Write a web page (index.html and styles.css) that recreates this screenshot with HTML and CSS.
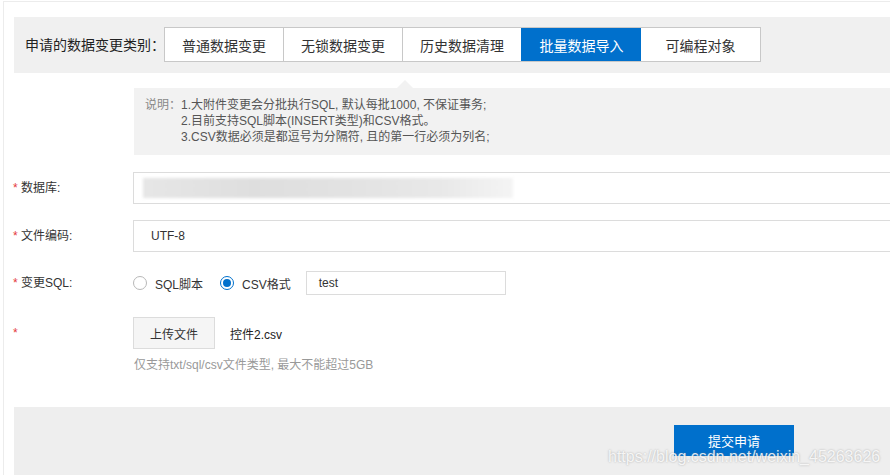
FILE: index.html
```html
<!DOCTYPE html>
<html lang="zh-CN">
<head>
<meta charset="utf-8">
<title>申请数据变更</title>
<link rel="stylesheet" href="styles.css">
</head>
<body>
<div class="page">
  <div class="band">
    <span class="band-label">申请的数据变更类别：</span>
    <div class="tabs">
      <span class="tab">普通数据变更</span>
      <span class="tab">无锁数据变更</span>
      <span class="tab">历史数据清理</span>
      <span class="tab active">批量数据导入</span>
      <span class="tab">可编程对象</span>
    </div>
  </div>

  <div class="desc">
    <span class="desc-title">说明：</span>
    <div class="desc-lines">
      <div>1.大附件变更会分批执行SQL, 默认每批1000, 不保证事务;</div>
      <div>2.目前支持SQL脚本(INSERT类型)和CSV格式。</div>
      <div>3.CSV数据必须是都逗号为分隔符, 且的第一行必须为列名;</div>
    </div>
  </div>

  <div class="form">
    <div class="row r1">
      <label class="label"><i>*</i> 数据库:</label>
      <div class="input wide"><span class="blurred"></span></div>
    </div>
    <div class="row r2">
      <label class="label"><i>*</i> 文件编码:</label>
      <div class="input wide enc">UTF-8</div>
    </div>
    <div class="row r3">
      <label class="label"><i>*</i> 变更SQL:</label>
      <div class="radios">
        <span class="radio"></span><span class="radio-text">SQL脚本</span>
        <span class="radio checked"></span><span class="radio-text last">CSV格式</span>
        <div class="input small">test</div>
      </div>
    </div>
    <div class="row r4">
      <label class="label"><i>*</i></label>
      <span class="upload">上传文件</span>
      <span class="file-name">控件2.csv</span>
    </div>
    <div class="hint">仅支持txt/sql/csv文件类型, 最大不能超过5GB</div>
  </div>

  <div class="footer">
    <span class="submit">提交申请</span>
    <span class="watermark">https://blog.csdn.net/weixin_45263626</span>
  </div>
</div>
</body>
</html>
```

FILE: styles.css
```css
html, body {
  margin: 0;
  padding: 0;
  overflow: hidden;
  background: #fff;
}
body {
  font-family: "Liberation Sans", "Noto Sans CJK SC", sans-serif;
  font-size: 12px;
  color: #333;
}
.page {
  position: relative;
  margin: 1px 0 0 3px;
  width: calc(100vw - 3px);
  height: 474px;
  overflow: hidden;
  border-top: 1px solid #ececec;
  border-left: 1px solid #ececec;
  padding: 15px 0 0 10px;
  box-sizing: border-box;
}
.band {
  height: 56px;
  background: #f0f0f0;
  display: flex;
  align-items: center;
  padding-left: 11px;
}
.band-label {
  font-size: 14px;
  color: #222;
  line-height: 20px;
  width: 139px;
  flex-shrink: 0;
  white-space: nowrap;
}
.tabs {
  display: flex;
  height: 35px;
  margin-top: -1px;
  border: 1px solid #c8c8c8;
  background: #fff;
  box-sizing: border-box;
}
.tab {
  width: 119px;
  display: flex;
  align-items: center;
  justify-content: center;
  font-size: 14px;
  color: #333;
  border-left: 1px solid #c8c8c8;
  box-sizing: border-box;
}
.tab:first-child {
  border-left: none;
  width: 118px;
}
.tab.active {
  background: #0070cc;
  color: #fff;
  border-left-color: #0070cc;
  width: 120px;
}
.tab.active + .tab {
  border-left: none;
}
.desc {
  position: relative;
  margin: 15px 0 0 120px;
  background: #f2f2f2;
  padding: 9px 11px 10px;
  display: flex;
  line-height: 16px;
}
.desc::before {
  content: "";
  position: absolute;
  left: 263px;
  top: -8px;
  border-left: 8px solid transparent;
  border-right: 8px solid transparent;
  border-bottom: 8px solid #f2f2f2;
}
.desc-title {
  color: #888;
  width: 36px;
}
.desc-lines {
  color: #555;
}
.form {
  margin-top: 17px;
}
.row {
  display: flex;
  align-items: center;
  height: 32px;
}
.r2 { margin-top: 16px; }
.r3 { margin-top: 15px; }
.r4 { margin-top: 18px; }
.label {
  width: 120px;
  margin-left: -1px;
  color: #333;
  line-height: 16px;
}
.label i {
  font-style: normal;
  color: #e4393c;
}
.input {
  border: 1px solid #dcdcdc;
  box-sizing: border-box;
  background: #fff;
  display: flex;
  align-items: center;
  color: #333;
}
.input.wide {
  flex: 1;
  height: 32px;
  padding-left: 17px;
  border-right: none;
}
.blurred {
  display: block;
  width: 370px;
  height: 20px;
  margin-left: -8px;
  background: linear-gradient(90deg, #e6e6e6 0%, #dedede 30%, #e2e2e2 55%, #e8e8e8 80%, #f4f4f4 100%);
  filter: blur(1.5px);
}
.radios {
  display: flex;
  align-items: center;
}
.radio {
  width: 14px;
  height: 14px;
  border: 1px solid #b8b8b8;
  border-radius: 50%;
  box-sizing: border-box;
  display: flex;
  align-items: center;
  justify-content: center;
  background: #fff;
}
.radio.checked {
  border-color: #0070cc;
}
.radio.checked::after {
  content: "";
  width: 8px;
  height: 8px;
  border-radius: 50%;
  background: #0070cc;
}
.radio-text {
  margin-left: 8px;
  margin-right: 17px;
  color: #333;
}
.radio-text.last {
  margin-right: 15px;
}
.input.small {
  width: 200px;
  height: 24px;
  padding-left: 12px;
}
.upload {
  width: 82px;
  height: 32px;
  box-sizing: border-box;
  border: 1px solid #dcdcdc;
  background: #f5f5f5;
  display: flex;
  align-items: center;
  justify-content: center;
  color: #333;
}
.file-name {
  margin-left: 15px;
  color: #222;
}
.hint {
  margin: 8px 0 0 120px;
  line-height: 16px;
  color: #999;
}
.footer {
  position: relative;
  margin-top: 34px;
  height: 70px;
  background: #eeeeee;
  padding: 18px 0 0 660px;
  box-sizing: border-box;
}
.submit {
  display: flex;
  width: 120px;
  height: 31px;
  align-items: center;
  justify-content: center;
  background: #0070cc;
  color: #fff;
  font-size: 13px;
}
.watermark {
  position: absolute;
  left: 594px;
  top: 40px;
  font-size: 16px;
  line-height: 20px;
  color: rgba(255, 255, 255, 0.85);
  text-shadow: 0 0 2px rgba(120, 120, 120, 0.6);
  white-space: nowrap;
}
```
